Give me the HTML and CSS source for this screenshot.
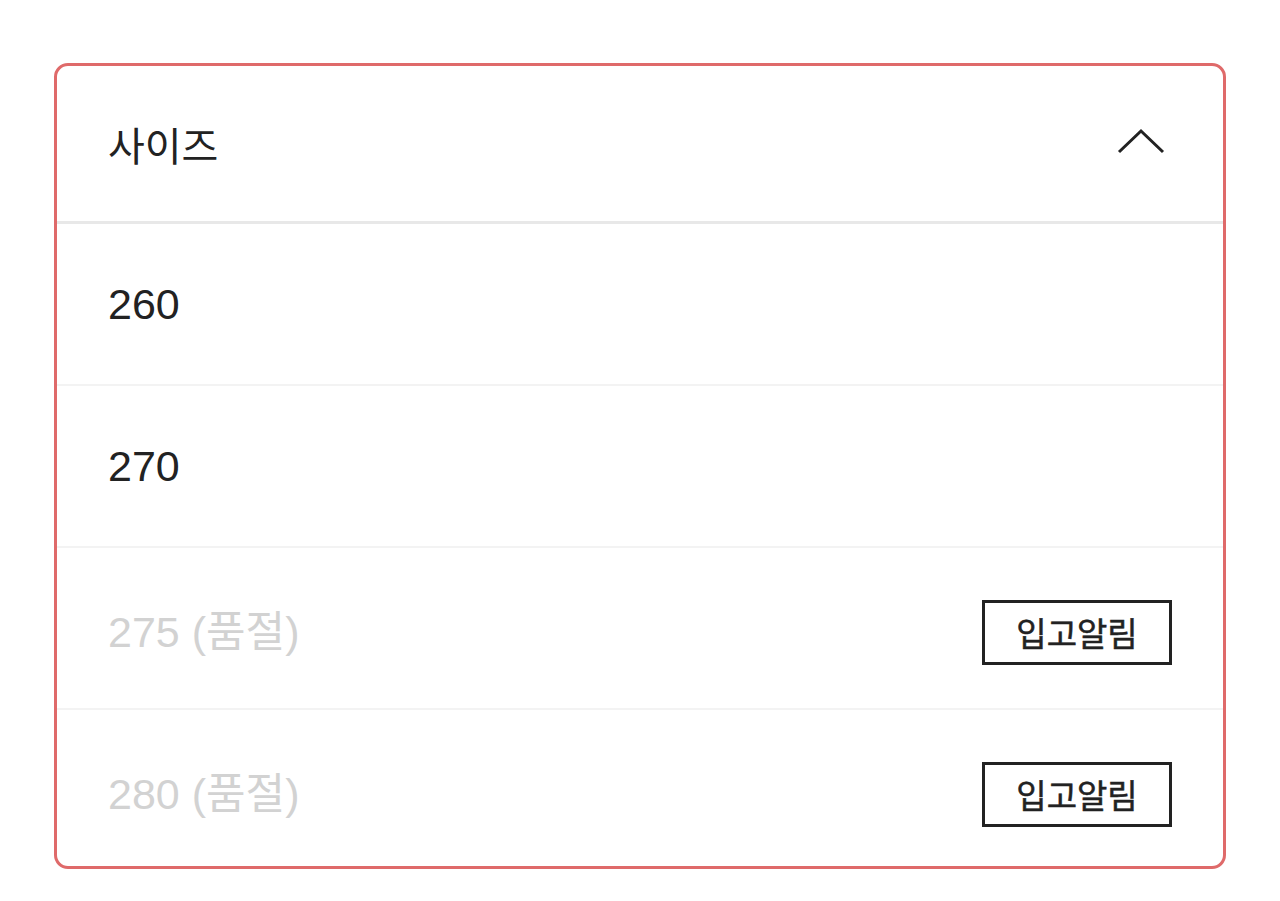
FILE: index.html
```html
<!DOCTYPE html>
<html lang="ko">
<head>
    <meta charset="utf-8">
    <title>사이즈</title>
    <link rel="stylesheet" href="styles.css">
</head>
<body>

<div class="size-box">
    <div class="size-head">
        <span class="size-title">사이즈</span>
        <svg class="chevron" width="48" height="26" viewBox="0 0 48 26">
            <polyline points="2,24 24,3 46,24" fill="none" stroke="#222" stroke-width="3"/>
        </svg>
    </div>

    <ul class="size-list">
        <li class="size-row">
            <span class="size-name">260</span>
        </li>
        <li class="size-row">
            <span class="size-name">270</span>
        </li>
        <li class="size-row soldout">
            <span class="size-name">275 (품절)</span>
            <button class="notify-btn">입고알림</button>
        </li>
        <li class="size-row soldout">
            <span class="size-name">280 (품절)</span>
            <button class="notify-btn">입고알림</button>
        </li>
    </ul>
</div>

</body>
</html>
```

FILE: styles.css
```css
* {
    box-sizing: border-box;
    font-family: "Liberation Sans", "Noto Sans CJK KR", sans-serif;
}

body {
    margin: 0;
    background-color: #fff;
    color: #222;
}

.size-box {
    margin: 63px 0 0 54px;
    width: 1172px;
    height: 806px;
    border: 3px solid #df6a6a;
    border-radius: 14px;
    overflow: hidden;
}

.size-head {
    display: flex;
    align-items: center;
    justify-content: space-between;
    height: 158px;
    padding: 0 58px 0 51px;
    border-bottom: 3px solid #e8e8e8;
}

.size-title {
    font-size: 40px;
}

.chevron {
    display: block;
    margin-top: -6px;
}

.size-list {
    list-style: none;
    margin: 0;
    padding: 0;
}

.size-row {
    display: flex;
    align-items: center;
    justify-content: space-between;
    height: 162px;
    padding: 0 51px;
    border-bottom: 2px solid #f3f3f3;
}

.size-name {
    font-size: 43px;
}

.soldout .size-name {
    color: #d2d2d2;
}

.notify-btn {
    width: 190px;
    height: 65px;
    margin-top: 8px;
    background: #fff;
    border: 3px solid #222;
    border-radius: 0;
    color: #222;
    font-size: 33px;
    -webkit-text-stroke: 0.5px #222;
    padding: 0;
}
```
